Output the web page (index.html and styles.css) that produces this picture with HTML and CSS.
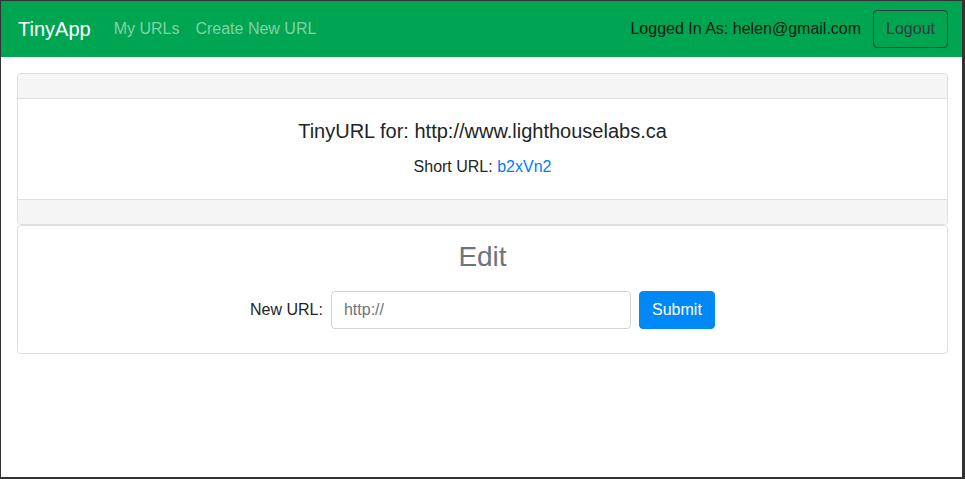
FILE: index.html
```html
<!DOCTYPE html>
<html lang="en">
<head>
<meta charset="utf-8">
<title>TinyApp</title>
<link rel="stylesheet" href="styles.css">
</head>
<body>
<div class="frame">
  <nav class="navbar">
    <a class="brand" href="#">TinyApp</a>
    <div class="nav-links">
      <a class="nav-link" href="#">My URLs</a>
      <a class="nav-link" href="#">Create New URL</a>
    </div>
    <div class="nav-right">
      <span class="logged">Logged In As: helen@gmail.com</span>
      <button class="btn-outline">Logout</button>
    </div>
  </nav>
  <main class="content">
    <div class="card">
      <div class="card-header"></div>
      <div class="card-body">
        <h5 class="card-title">TinyURL for: http://www.lighthouselabs.ca</h5>
        <p class="card-text">Short URL: <a class="link" href="#">b2xVn2</a></p>
      </div>
      <div class="card-footer"></div>
    </div>
    <div class="card">
      <div class="card-body edit-body">
        <h3 class="edit-title">Edit</h3>
        <form class="edit-form">
          <label class="form-label" for="newurl">New URL:</label>
          <input class="form-input" id="newurl" type="text" placeholder="http://">
          <button class="btn-primary" type="button">Submit</button>
        </form>
      </div>
    </div>
  </main>
</div>
</body>
</html>
```

FILE: styles.css
```css
* { box-sizing: border-box; }
html, body { margin: 0; padding: 0; height: 100%; }
body {
  font-family: "Liberation Sans", Arial, sans-serif;
  font-size: 16px;
  line-height: 1.5;
  color: #212529;
  background: #fff;
}
.frame {
  height: 479px;
  border-style: solid;
  border-color: #333;
  border-width: 1px 3px 2px 1px;
}
.navbar {
  display: flex;
  align-items: center;
  height: 56px;
  padding: 0 14px 0 16px;
  background: #00a551;
}
.brand {
  font-size: 20px;
  line-height: 30px;
  color: #fff;
  text-decoration: none;
  margin-right: 23px;
  margin-left: 1px;
}
.nav-links { display: flex; gap: 16px; }
.nav-link {
  color: rgba(255,255,255,0.5);
  text-decoration: none;
}
.nav-right {
  margin-left: auto;
  display: flex;
  align-items: center;
}
.logged {
  color: rgba(0,0,0,0.85);
  margin-right: 12px;
}
.btn-outline {
  font-family: inherit;
  font-size: 16px;
  line-height: 24px;
  height: 38px;
  padding: 6px 12px;
  color: #343a40;
  background: transparent;
  border: 1px solid #343a40;
  border-radius: 4px;
}
.content {
  padding: 16px 14px 0 16px;
}
.card {
  border: 1px solid #dfdfdf;
  border-radius: 4px;
  background: #fff;
}
.card-header {
  height: 25px;
  background: #f5f5f5;
  border-bottom: 1px solid #dfdfdf;
  border-radius: 3px 3px 0 0;
}
.card-footer {
  height: 25px;
  background: #f5f5f5;
  border-top: 1px solid #dfdfdf;
  border-radius: 0 0 3px 3px;
}
.card-body {
  padding: 20px;
  text-align: center;
}
.edit-body {
  padding: 14px 20px 24px;
}
.card-title {
  margin: 0 0 12px;
  font-size: 20px;
  font-weight: 400;
  line-height: 24px;
}
.card-text { margin: 0; line-height: 24px; }
.link { color: #007bff; text-decoration: none; }
.edit-title {
  margin: 0 0 17px;
  font-size: 28px;
  font-weight: 400;
  line-height: 34px;
  color: #6c757d;
}
.edit-form {
  display: flex;
  justify-content: center;
  align-items: center;
}
.form-label { margin-right: 8px; }
.form-input {
  width: 300px;
  height: 38px;
  padding: 6px 12px;
  font-family: inherit;
  font-size: 16px;
  color: #495057;
  border: 1px solid #ced4da;
  border-radius: 4px;
  margin-right: 8px;
}
.form-input::placeholder { color: #6c757d; opacity: 1; }
.btn-primary {
  font-family: inherit;
  font-size: 16px;
  line-height: 24px;
  padding: 6px 12px;
  height: 38px;
  width: 76px;
  color: #fff;
  background: #0088f5;
  border: 1px solid #0088f5;
  border-radius: 4px;
}
```
